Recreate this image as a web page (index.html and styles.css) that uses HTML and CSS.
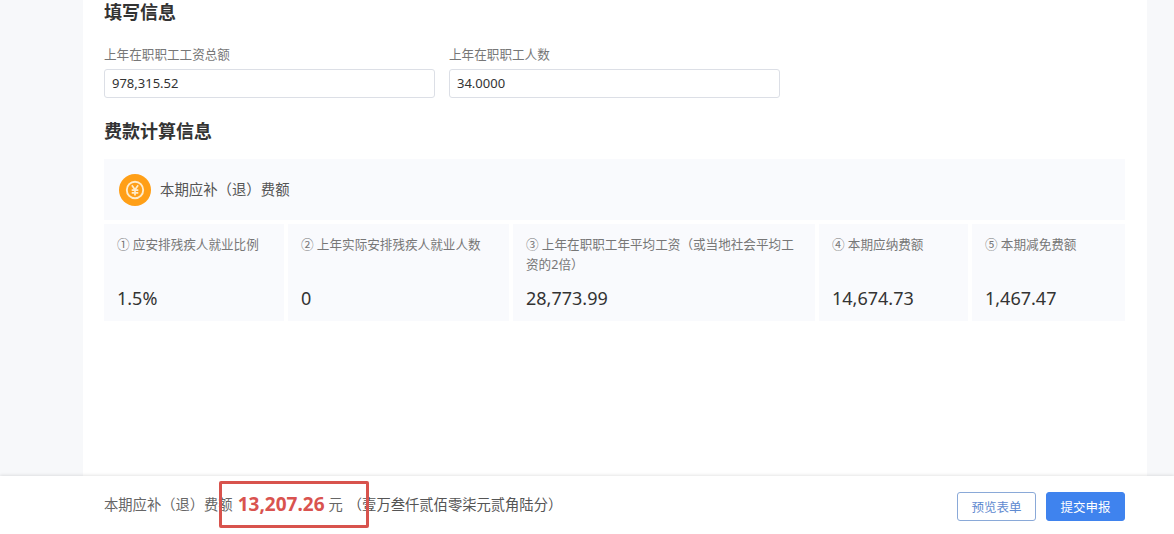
FILE: index.html
```html
<!DOCTYPE html>
<html lang="zh-CN">
<head>
<meta charset="utf-8">
<title>费款计算信息</title>
<link rel="stylesheet" href="styles.css">
</head>
<body>
<div class="page">
  <main class="panel">
    <h2 class="title">填写信息</h2>
    <div class="fields">
      <label class="field">
        <span class="field-label">上年在职职工工资总额</span>
        <span class="input">978,315.52</span>
      </label>
      <label class="field">
        <span class="field-label">上年在职职工人数</span>
        <span class="input">34.0000</span>
      </label>
    </div>
    <h2 class="title title-calc">费款计算信息</h2>
    <div class="summary">
      <svg class="coin" viewBox="0 0 32 32" width="32" height="32" aria-hidden="true">
        <circle cx="16" cy="16" r="16" fill="#ff9f17"/>
        <circle cx="16" cy="16" r="8.2" fill="none" stroke="#ffeccb" stroke-width="1.9"/>
        <path d="M12.9 11.2l3.1 4.6 3.1-4.6M12.7 16.2h6.6M12.7 18.9h6.6M16 15.8v5.6" fill="none" stroke="#ffeccb" stroke-width="1.7"/>
      </svg>
      <span class="summary-text">本期应补（退）费额</span>
    </div>
    <div class="cells">
      <div class="cell"><div class="cell-label">① 应安排残疾人就业比例</div><div class="cell-value">1.5%</div></div>
      <div class="cell"><div class="cell-label">② 上年实际安排残疾人就业人数</div><div class="cell-value">0</div></div>
      <div class="cell"><div class="cell-label">③ 上年在职职工年平均工资（或当地社会平均工资的2倍）</div><div class="cell-value">28,773.99</div></div>
      <div class="cell"><div class="cell-label">④ 本期应纳费额</div><div class="cell-value">14,674.73</div></div>
      <div class="cell"><div class="cell-label">⑤ 本期减免费额</div><div class="cell-value">1,467.47</div></div>
    </div>
  </main>
  <footer class="bar">
    <div class="total">
      <span class="total-label">本期应补（退）费额</span>
      <strong class="total-num">13,207.26</strong>
      <span class="total-unit">元</span>
      <span class="total-cn">（壹万叁仟贰佰零柒元贰角陆分）</span>
    </div>
    <div class="actions">
      <button class="btn btn-ghost" type="button">预览表单</button>
      <button class="btn btn-primary" type="button">提交申报</button>
    </div>
    <div class="mark"></div>
  </footer>
</div>
</body>
</html>
```
FILE: styles.css
```css
* { box-sizing: border-box; }
html, body { margin: 0; padding: 0; height: 100%; overflow: hidden; }
body {
  background: #f7f8fa;
  color: #333;
  font-family: "Noto Sans", "Noto Sans CJK SC", sans-serif;
}
.page { display: flex; flex-direction: column; height: 534px; }
.panel {
  flex: 1;
  margin: 0 27px 0 83px;
  padding: 0 22px 0 21px;
  background: #fff;
  overflow: hidden;
}
.title {
  margin: 0;
  font-size: 18px;
  line-height: 24px;
  font-weight: 700;
  color: #333;
}
.fields { display: flex; gap: 14px; margin-top: 22px; }
.field { display: block; width: 331px; }
.field-label { display: block; font-size: 12.6px; line-height: 18px; color: #777; }
.input {
  display: block;
  height: 29px;
  margin-top: 5px;
  padding: 0 7px;
  border: 1px solid #dcdfe6;
  border-radius: 3px;
  font-size: 13px;
  line-height: 27px;
  color: #333;
}
.title-calc { margin-top: 21px; }
.summary {
  display: flex;
  align-items: center;
  gap: 9px;
  height: 61px;
  margin-top: 16px;
  padding-left: 15px;
  background: #f9fafd;
}
.summary-text { margin-bottom: 2px; font-size: 14.4px; color: #555; }
.cells {
  display: grid;
  grid-template-columns: 180px 221px 302px 149px 153px;
  column-gap: 4px;
  margin-top: 4px;
  width: 1021px;
}
.cell { height: 97px; padding: 11px 13px 0; background: #f9fafd; }
.cell-label { height: 42px; font-size: 12.6px; line-height: 20px; color: #777; }
.cell-value { margin-top: 8px; font-size: 18px; line-height: 26px; color: #333; }
.bar {
  position: relative;
  display: flex;
  justify-content: space-between;
  align-items: center;
  height: 58px;
  padding: 0 49px 0 104px;
  background: #fff;
  box-shadow: 0 -1px 3px rgba(0, 0, 0, .1);
}
.total { display: flex; align-items: center; margin-bottom: 3px; font-size: 14.3px; color: #666; }
.total-num { margin-left: 5px; font-size: 19px; font-weight: 700; color: #d9534f; }
.total-unit { margin-left: 4px; }
.total-cn { margin-left: 5px; color: #555; }
.actions { display: flex; gap: 10px; margin-top: 3px; }
.btn {
  width: 79px;
  height: 29px;
  padding: 0;
  border-radius: 3px;
  font-family: inherit;
  font-size: 12.5px;
}
.btn-ghost { background: #fff; border: 1px solid #8aa9d8; color: #5f8ad0; }
.btn-primary { background: #3f83ee; border: 1px solid #3f83ee; color: #fff; }
.mark {
  position: absolute;
  left: 219px;
  top: 5px;
  width: 150px;
  height: 47px;
  border: 3px solid #d8534d;
  border-radius: 2px;
}
```
